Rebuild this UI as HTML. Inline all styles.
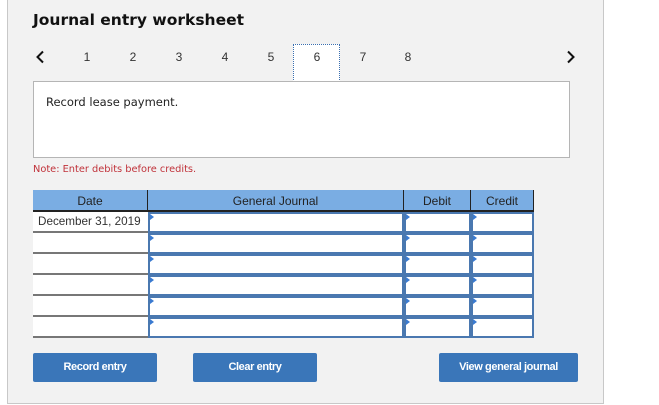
<!DOCTYPE html>
<html><head><style>
*{margin:0;padding:0;box-sizing:border-box}
body{width:659px;height:405px;background:#fff;position:relative;font-family:"Liberation Sans",sans-serif;overflow:hidden}
.a{position:absolute}
.panel{left:7px;top:-2px;width:597px;height:406px;background:#f2f2f2;border:1px solid #c8c8c8}
.n{top:50px;font-size:12px;color:#333;width:20px;text-align:center}
.btn{top:353px;height:29px;background:#3a76b9;border-radius:2px;color:#fff;font-weight:bold;font-size:11px;text-align:center;line-height:29px;letter-spacing:-0.4px}
.h{top:190px;height:22px;background:#7aade3;color:#222;font-size:12px;text-align:center;line-height:22px;border-bottom:2px solid #222}
.dc{left:33px;width:115px;height:21px;background:#fff;border-bottom:2px solid #777;font-size:11.7px;color:#333;padding-left:5px;line-height:19px}
.in{height:21px;background:#fff;border:2px solid #4a78b0}
.in::before{content:"";position:absolute;left:0;top:0;border-left:4px solid #3a7ad0;border-top:3px solid transparent;border-bottom:3px solid transparent}
</style></head><body>
<div class="a panel"></div>
<div class="a" style="left:33px;top:11px;font-family:'DejaVu Sans',sans-serif;font-weight:bold;font-size:15.5px;color:#111">Journal entry worksheet</div>
<svg class="a" style="left:35px;top:50px" width="10" height="14" viewBox="0 0 10 14"><path d="M8 1.5 L2.5 7 L8 12.5" fill="none" stroke="#111" stroke-width="2"/></svg>
<svg class="a" style="left:566px;top:50px" width="10" height="14" viewBox="0 0 10 14"><path d="M2 1.5 L7.5 7 L2 12.5" fill="none" stroke="#111" stroke-width="2"/></svg>
<div class="a n" style="left:77px">1</div>
<div class="a n" style="left:123px">2</div>
<div class="a n" style="left:169px">3</div>
<div class="a n" style="left:215px">4</div>
<div class="a n" style="left:261px">5</div>
<div class="a" style="left:293px;top:44px;width:47px;height:38px;background:#fff;border:1px dotted #3a6fb0;border-bottom:none"></div>
<div class="a n" style="left:307px">6</div>
<div class="a n" style="left:353px">7</div>
<div class="a n" style="left:398px">8</div>
<div class="a" style="left:33px;top:81px;width:537px;height:77px;background:#fff;border:1px solid #b5b5b5;padding:13px 12px;font-size:11.5px;color:#222;font-family:'DejaVu Sans',sans-serif">Record lease payment.</div>
<div class="a" style="left:33px;top:164px;font-size:9.8px;color:#c0323a;font-family:'DejaVu Sans',sans-serif">Note: Enter debits before credits.</div>
<div class="a h" style="left:33px;width:114px">Date</div>
<div class="a h" style="left:147px;width:256px;border-left:1px solid #222">General Journal</div>
<div class="a h" style="left:403px;width:67px;border-left:1px solid #222">Debit</div>
<div class="a h" style="left:470px;width:64px;border-left:1px solid #222;border-right:1px solid #222">Credit</div>
<div class="a" style="left:147px;top:212px;width:2px;height:126px;background:#4a6f9a"></div>
<div class="a dc" style="top:212px">December 31, 2019</div>
<div class="a dc" style="top:233px"></div>
<div class="a dc" style="top:254px"></div>
<div class="a dc" style="top:275px"></div>
<div class="a dc" style="top:296px"></div>
<div class="a dc" style="top:317px"></div>
<div class="a in" style="left:148px;top:212px;width:256px"></div><div class="a in" style="left:404px;top:212px;width:67px"></div><div class="a in" style="left:471px;top:212px;width:63px"></div>
<div class="a in" style="left:148px;top:233px;width:256px"></div><div class="a in" style="left:404px;top:233px;width:67px"></div><div class="a in" style="left:471px;top:233px;width:63px"></div>
<div class="a in" style="left:148px;top:254px;width:256px"></div><div class="a in" style="left:404px;top:254px;width:67px"></div><div class="a in" style="left:471px;top:254px;width:63px"></div>
<div class="a in" style="left:148px;top:275px;width:256px"></div><div class="a in" style="left:404px;top:275px;width:67px"></div><div class="a in" style="left:471px;top:275px;width:63px"></div>
<div class="a in" style="left:148px;top:296px;width:256px"></div><div class="a in" style="left:404px;top:296px;width:67px"></div><div class="a in" style="left:471px;top:296px;width:63px"></div>
<div class="a in" style="left:148px;top:317px;width:256px"></div><div class="a in" style="left:404px;top:317px;width:67px"></div><div class="a in" style="left:471px;top:317px;width:63px"></div>
<div class="a btn" style="left:33px;width:124px">Record entry</div>
<div class="a btn" style="left:193px;width:124px">Clear entry</div>
<div class="a btn" style="left:439px;width:139px">View general journal</div>
</body></html>
